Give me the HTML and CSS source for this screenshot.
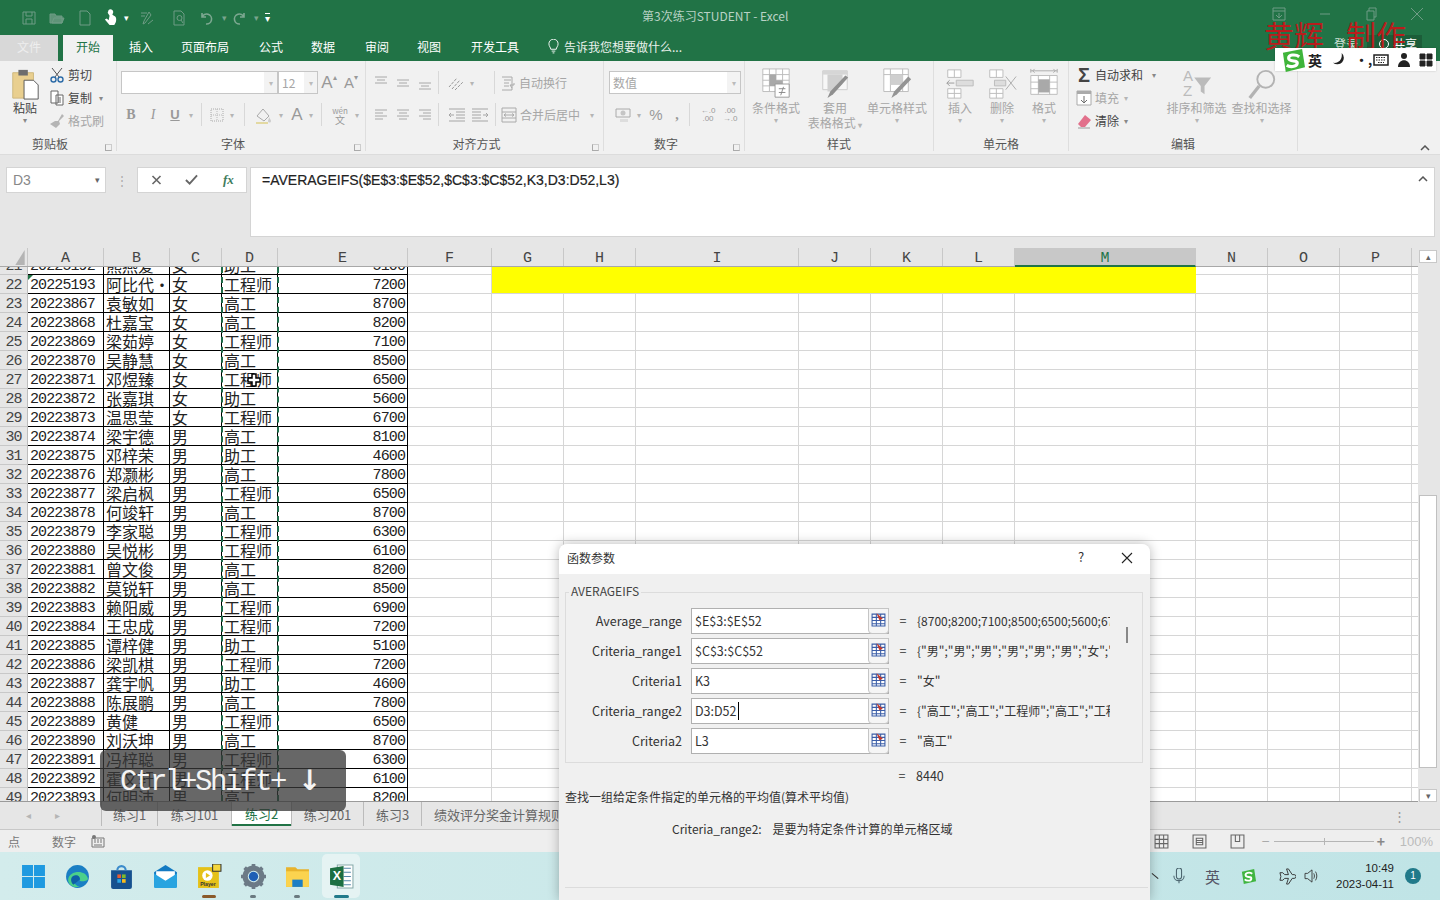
FILE: index.html
```html
<!DOCTYPE html>
<html lang="zh-CN">
<head>
<meta charset="utf-8">
<title>第3次练习STUDENT - Excel</title>
<link rel="stylesheet" href="styles.css">
</head>
<body>
<div class="app">

<header class="titlebar">
  <div class="qat">
    <svg class="qi" viewBox="0 0 16 16"><path d="M2 2h12v12H2zM5 2v4h6V2M5 14V9h6v5" class="gs"/></svg>
    <svg class="qi" viewBox="0 0 16 16"><path d="M1 13V4h5l1 2h6v7zM3 13l2-5h10l-2 5z" class="gs gf"/></svg>
    <svg class="qi" viewBox="0 0 16 16"><path d="M3 1h7l3 3v11H3z" class="gs"/></svg>
    <svg class="qi qw" viewBox="0 0 16 20"><path d="M6 2a3 3 0 0 1 5 2l-1 3 3 2c2 2 1 7-1 9H7L2 12l2-1 2 2 1-5-2-3z" fill="#fff"/></svg>
    <span class="qc">▾</span>
    <svg class="qi qs" viewBox="0 0 16 16"><path d="M2 3h6M2 6h4M10 2l2 3-6 8-2 1 1-3zM9 14l5-4" class="gs"/></svg>
    <svg class="qi" viewBox="0 0 16 16"><path d="M3 1h7l3 3v11H3zM6 8a2.500 2.500 0 1 0 5 0 2.500 2.500 0 1 0-5 0M10 10l2 3" class="gs"/></svg>
    <svg class="qi" viewBox="0 0 16 16"><path d="M3 3v4h4M3 7a5 5 0 1 1 4 7" class="gs gb"/></svg>
    <span class="qc dim">▾</span>
    <svg class="qi" viewBox="0 0 16 16"><path d="M13 3v4H9M13 7a5 5 0 1 0-4 7" class="gs gb"/></svg>
    <span class="qc dim">▾</span>
    <span class="qm">▾</span>
  </div>
  <div class="doc-title">第3次练习STUDENT - Excel</div>
  <div class="winctl">
    <svg class="wi" viewBox="0 0 14 14"><path d="M1 1h12v12H1zM1 4h12M7 6v5M4 8l3 3 3-3" class="gs"/></svg>
    <svg class="wi" viewBox="0 0 14 14"><path d="M2 7h10" class="gs"/></svg>
    <svg class="wi" viewBox="0 0 14 14"><path d="M3 4h7v9H3zM5 4V1h7v9h-2" class="gs"/></svg>
    <svg class="wi" viewBox="0 0 14 14"><path d="M1 1l12 12M13 1L1 13" class="gs"/></svg>
  </div>
</header>

<nav class="tabs">
  <span class="tab file">文件</span>
  <span class="tab home">开始</span>
  <span class="tab t-a">插入</span>
  <span class="tab t-b">页面布局</span>
  <span class="tab t-c">公式</span>
  <span class="tab t-d">数据</span>
  <span class="tab t-e">审阅</span>
  <span class="tab t-f">视图</span>
  <span class="tab t-g">开发工具</span>
  <span class="tell">
    <svg class="bulb" viewBox="0 0 12 16"><path d="M3 11c0-2-2-3-2-6a5 5 0 0 1 10 0c0 3-2 4-2 6zM4 13h4M5 15h2" fill="none" stroke="#fff"/></svg>
    告诉我您想要做什么...
  </span>
  <span class="signin"><span class="login">登录</span><span class="share"><i class="person"></i>共享</span></span>
</nav>

<section class="ribbon">
  <div class="group g-clip">
    <div class="gbody">
      <div class="bigbtn paste">
        <svg class="ic-paste" viewBox="0 0 30 34">
          <path d="M2 5h22v27H2z" fill="#e9cf8f" stroke="#cdb67c"/>
          <path d="M8 2h10v6H8z" fill="#6d6d6d"/>
          <path d="M14 13h10l5 5v15H14z" fill="#fff" stroke="#555"/>
        </svg>
        <span class="dark">粘贴</span>
        <span class="car">▾</span>
      </div>
      <div class="smallcol">
        <div class="srow dark"><svg class="i16" viewBox="0 0 16 16"><path d="M3 1l7 9M13 1L6 10" stroke="#555" fill="none"/><circle cx="4.500" cy="12.500" r="2.500" fill="none" stroke="#2d6ca8" stroke-width="1.400"/><circle cx="11.500" cy="12.500" r="2.500" fill="none" stroke="#2d6ca8" stroke-width="1.400"/></svg>剪切</div>
        <div class="srow dark"><svg class="i16" viewBox="0 0 16 16"><path d="M2 1h7v12H2zM7 5h7v10H7zM9 8h3M9 10h3M9 12h3" fill="#fff" stroke="#666"/></svg>复制<span class="car lcar">▾</span></div>
        <div class="srow off"><svg class="i16" viewBox="0 0 16 16"><path d="M13 1l2 2-5 5 1 3-4 4-6-4 5-3 3 0z" fill="#b5b5b5"/></svg>格式刷</div>
      </div>
    </div>
    <div class="glabel lab-l">剪贴板<i class="launch"></i></div>
  </div>

  <div class="group g-font">
    <div class="gbody col">
      <div class="r1">
        <span class="fbox w-font"><span class="fdrop">▾</span></span>
        <span class="fbox w-size off">12<span class="fdrop">▾</span></span>
        <span class="ib w-22 big off">A<sup>▴</sup></span>
        <span class="ib w-22 mid off">A<sup>▾</sup></span>
      </div>
      <div class="r2 off">
        <span class="ib w-22 bold">B</span>
        <span class="ib w-22 ital">I</span>
        <span class="ib w-22 und">U</span>
        <span class="ib w-10 car">▾</span>
        <i class="vs"></i>
        <svg class="i16 mx-b" viewBox="0 0 16 16"><path d="M2 2h12v12H2z" fill="none" stroke="#aaa" stroke-dasharray="1 1"/><path d="M8 2v12M2 8h12" stroke="#bbb" stroke-dasharray="1 1"/></svg>
        <span class="ib w-14 car">▾</span>
        <i class="vs"></i>
        <svg class="i20 paint" viewBox="0 0 20 18"><path d="M3 10l6-7 6 7-5 5z" fill="none" stroke="#aaa"/><path d="M15 11c1 2 2 3 2 4a1.500 1.500 0 0 1-3 0c0-1 1-2 1-4" fill="#ccc"/><path d="M2 16h12v2H2z" fill="#e3d9a2"/></svg>
        <span class="ib w-14 car">▾</span>
        <span class="ib w-18 big">A</span>
        <span class="ib w-10 car">▾</span>
        <i class="vs"></i>
        <span class="wen"><small>wén</small>文</span>
        <span class="ib w-10 car">▾</span>
      </div>
    </div>
    <div class="glabel lab-l">字体<i class="launch"></i></div>
  </div>

  <div class="group g-align">
    <div class="gbody col">
      <div class="r1 al1 off">
        <svg class="i16 lines top" viewBox="0 0 16 16"><path d="M2 2h12M4 5h8M2 8h12"/></svg>
        <svg class="i16 lines" viewBox="0 0 16 16"><path d="M2 5h12M4 8h8M2 11h12"/></svg>
        <svg class="i16 lines" viewBox="0 0 16 16"><path d="M2 8h12M4 11h8M2 14h12"/></svg>
        <i class="vs"></i>
        <svg class="i20 ml-o" viewBox="0 0 20 16"><path d="M2 12L10 3M5 14l8-9M8 15l8-8" fill="none" stroke="#999" stroke-dasharray="3 1"/></svg>
        <span class="ib w-10 car">▾</span>
        <i class="vs vs-b"></i>
        <svg class="i16" viewBox="0 0 16 16"><path d="M2 2h10v13H2M4 5h7M4 8h5M4 11h5M10 10h4v-2M12 13l-2-3" fill="none" stroke="#aaa"/></svg>
        <span class="wtext">自动换行</span>
      </div>
      <div class="r2 al2 off">
        <svg class="i16 lines" viewBox="0 0 16 16"><path d="M2 3h12M2 6h8M2 9h12M2 12h8"/></svg>
        <svg class="i16 lines" viewBox="0 0 16 16"><path d="M2 3h12M4 6h8M2 9h12M4 12h8"/></svg>
        <svg class="i16 lines" viewBox="0 0 16 16"><path d="M2 3h12M6 6h8M2 9h12M6 12h8"/></svg>
        <i class="vs"></i>
        <svg class="i20 ml-i" viewBox="0 0 20 16"><path d="M2 2h16M9 5h9M9 8h9M9 11h9M2 14h16M7 8H2M4 6L2 8l2 2" fill="none" stroke="#a5a5a5"/></svg>
        <svg class="i20" viewBox="0 0 20 16"><path d="M2 2h16M2 5h9M2 8h9M2 11h9M2 14h16M13 8h5M16 6l2 2-2 2" fill="none" stroke="#a5a5a5"/></svg>
        <i class="vs vs-c"></i>
        <svg class="i16" viewBox="0 0 16 16"><path d="M1 1h14v14H1zM1 5h14M1 11h14M3 8h10M5 6.500L3 8l2 1.500M11 6.500L13 8l-2 1.500" fill="none" stroke="#aaa"/></svg>
        <span class="wtext">合并后居中</span>
        <span class="ib w-24 car">▾</span>
      </div>
    </div>
    <div class="glabel lab-l">对齐方式<i class="launch"></i></div>
  </div>

  <div class="group g-num">
    <div class="gbody col">
      <div class="r1 n1"><span class="fbox w-num off">数值<span class="fdrop">▾</span></span></div>
      <div class="r2 n2 off">
        <svg class="i20" viewBox="0 0 20 16"><path d="M2 2h14v8H2z" fill="none" stroke="#aaa"/><circle cx="9" cy="6" r="2.500" fill="#c5c5c5"/><path d="M6 12h8v3H6z" fill="#ddd"/></svg>
        <span class="ib w-10 car">▾</span>
        <span class="ib w-28 pct">%</span>
        <span class="ib w-14 bold">,</span>
        <i class="vs"></i>
        <span class="dec">←.0<br>.00</span>
        <span class="dec">.00<br>→.0</span>
      </div>
    </div>
    <div class="glabel lab-l">数字<i class="launch"></i></div>
  </div>

  <div class="group g-style">
    <div class="gbody off">
      <div class="bigbtn w-cf">
        <svg class="ic-big" viewBox="0 0 32 34"><path d="M2 1h28v24H2zM2 7h28M2 13h28M2 19h28M9 1v24M16 1v24M23 1v24" fill="#fff" stroke="#bbb"/><path d="M9 7h7v6h7v6H9z" fill="#a9a9a9"/><path d="M15 17h15v14H15z" fill="#fff" stroke="#999"/><path d="M19 22h7M19 26h7M24 20l-3 9" stroke="#888" fill="none"/></svg>
        <span>条件格式</span><span class="car">▾</span>
      </div>
      <div class="bigbtn w-tf">
        <svg class="ic-big" viewBox="0 0 32 34"><path d="M3 3h26v20H3z" fill="#f7f7f7" stroke="#ccc"/><path d="M3 3h26v4H3z" fill="#d6d6d6"/><path d="M8 7h16v10L14 25H8z" fill="#d0d0d0"/><path d="M30 10L14 28l-6 4 3-7 16-17z" fill="#8f8f8f"/></svg>
        <span>套用</span><span>表格格式 <b class="car">▾</b></span>
      </div>
      <div class="bigbtn w-cs">
        <svg class="ic-big" viewBox="0 0 32 34"><path d="M2 1h26v24H2zM2 7h26M9 1v24M22 1v24" fill="#fff" stroke="#bbb"/><path d="M9 7h13v11H9z" fill="#cfcfcf"/><path d="M31 12L16 28l-6 4 3-7 15-16z" fill="#949494"/></svg>
        <span>单元格样式</span><span class="car">▾</span>
      </div>
    </div>
    <div class="glabel">样式</div>
  </div>

  <div class="group g-cells">
    <div class="gbody off">
      <div class="bigbtn w-42">
        <svg class="ic-big" viewBox="0 0 32 34"><path d="M3 2h14v8H3zM3 22h14v10H3zM10 2v8M10 22v10M3 27h14" fill="#fff" stroke="#bbb"/><path d="M12 13h18v6H12z" fill="#ddd" stroke="#bbb"/><path d="M10 16H2M5 13l-3 3 3 3" fill="none" stroke="#999"/></svg>
        <span>插入</span><span class="car">▾</span>
      </div>
      <div class="bigbtn w-42">
        <svg class="ic-big" viewBox="0 0 32 34"><path d="M3 2h14v8H3zM3 22h14v10H3zM10 2v8M10 22v10M3 27h14" fill="#fff" stroke="#bbb"/><path d="M8 13h12v6H8z" fill="#ddd" stroke="#bbb"/><path d="M20 9l11 14M31 9L20 23" stroke="#aaa" fill="none"/></svg>
        <span>删除</span><span class="car">▾</span>
      </div>
      <div class="bigbtn w-42">
        <svg class="ic-big" viewBox="0 0 32 34"><path d="M2 3h28M2 1v4M30 1v4M4 3l2-2M4 3l2 2M28 3l-2-2M28 3l-2 2" fill="none" stroke="#aaa"/><path d="M2 8h28v20H2zM2 15h28M2 22h28M10 8v20M22 8v20" fill="#fff" stroke="#bbb"/><path d="M10 12h12v14H10z" fill="#a9a9a9"/></svg>
        <span>格式</span><span class="car">▾</span>
      </div>
    </div>
    <div class="glabel">单元格</div>
  </div>

  <div class="group g-edit">
    <div class="gbody">
      <div class="smallcol edit">
        <div class="srow dark"><span class="sigma">Σ</span>自动求和<span class="car lcar2">▾</span></div>
        <div class="srow off"><svg class="i16" viewBox="0 0 16 16"><path d="M1 1h14v14H1z" fill="#fff" stroke="#aaa"/><path d="M1 1h14v3H1z" fill="#aaa"/><path d="M8 6v7M5 10l3 3 3-3" fill="none" stroke="#6d6d6d"/></svg>填充<span class="car lcar3">▾</span></div>
        <div class="srow dark"><svg class="i16" viewBox="0 0 16 16"><path d="M9 2l6 5-6 7H5L2 11z" fill="#e2708b"/><path d="M2 15h12" stroke="#999"/></svg>清除<span class="car lcar3">▾</span></div>
      </div>
      <div class="bigbtn w-65 off">
        <svg class="ic-big" viewBox="0 0 34 34"><text x="2" y="14" class="azt">A</text><text x="2" y="30" class="azt">Z</text><path d="M14 10h18l-7 9v9l-4-3v-6z" fill="#bbb"/></svg>
        <span>排序和筛选</span><span class="car">▾</span>
      </div>
      <div class="bigbtn w-65 off">
        <svg class="ic-big" viewBox="0 0 34 34"><circle cx="21" cy="12" r="9" fill="none" stroke="#b3b3b3" stroke-width="2"/><path d="M14 19L4 32" stroke="#b3b3b3" stroke-width="3.500"/></svg>
        <span>查找和选择</span><span class="car">▾</span>
      </div>
    </div>
    <div class="glabel">编辑</div>
  </div>
  <div class="collapse">
    <svg class="chev" viewBox="0 0 10 6"><path d="M1 5l4-4 4 4" fill="none" stroke="#555" stroke-width="1.500"/></svg>
  </div>
</section>

<section class="fbar">
  <div class="namebox">D3<span class="nb-drop">▾</span></div>
  <div class="fgrip">⋮</div>
  <div class="fbtns">
    <svg class="fi" viewBox="0 0 12 12"><path d="M2 2l8 8M10 2l-8 8" stroke="#666" stroke-width="1.600"/></svg>
    <svg class="fi" viewBox="0 0 14 12"><path d="M1 6l4 4 8-9" fill="none" stroke="#666" stroke-width="2"/></svg>
    <span class="fx">fx</span>
  </div>
  <div class="finput">=AVERAGEIFS($E$3:$E$52,$C$3:$C$52,K3,D3:D52,L3)<span class="fup">
    <svg class="chev" viewBox="0 0 10 6"><path d="M1 5l4-4 4 4" fill="none" stroke="#555" stroke-width="1.500"/></svg></span></div>
</section>

<section class="sheet">
  <div class="sheet-main">
    <div class="colhead">
      <div class="corner"><svg class="tri" viewBox="0 0 10 16"><path d="M10 0v16H0z" fill="#b4b4b4"/></svg></div>
      <div class="ch ca">A</div><div class="ch cb">B</div><div class="ch cc">C</div><div class="ch cd">D</div><div class="ch ce">E</div>
      <div class="ch cf">F</div><div class="ch cg">G</div><div class="ch cg">H</div><div class="ch ci">I</div><div class="ch cg">J</div><div class="ch cg">K</div><div class="ch cg">L</div><div class="ch cm sel">M</div><div class="ch cg">N</div><div class="ch cg">O</div><div class="ch cg">P</div>
    </div>
    <div class="body">
      <div class="rows">
        <div class="row first"><div class="rh">21</div><div class="c ca n">20225192</div><div class="c cb">熊燕爱</div><div class="c cc">女</div><div class="c cd">助工</div><div class="c ce n r">5100</div></div>
        <div class="row"><div class="rh">22</div><div class="c ca n flag">20225193</div><div class="c cb">阿比代·</div><div class="c cc">女</div><div class="c cd">工程师</div><div class="c ce n r">7200</div></div>
        <div class="row"><div class="rh">23</div><div class="c ca n">20223867</div><div class="c cb">袁敏如</div><div class="c cc">女</div><div class="c cd">高工</div><div class="c ce n r">8700</div></div>
        <div class="row"><div class="rh">24</div><div class="c ca n">20223868</div><div class="c cb">杜嘉宝</div><div class="c cc">女</div><div class="c cd">高工</div><div class="c ce n r">8200</div></div>
        <div class="row"><div class="rh">25</div><div class="c ca n">20223869</div><div class="c cb">梁茹婷</div><div class="c cc">女</div><div class="c cd">工程师</div><div class="c ce n r">7100</div></div>
        <div class="row"><div class="rh">26</div><div class="c ca n">20223870</div><div class="c cb">吴静慧</div><div class="c cc">女</div><div class="c cd">高工</div><div class="c ce n r">8500</div></div>
        <div class="row"><div class="rh">27</div><div class="c ca n">20223871</div><div class="c cb">邓煜臻</div><div class="c cc">女</div><div class="c cd">工程师</div><div class="c ce n r">6500</div></div>
        <div class="row"><div class="rh">28</div><div class="c ca n">20223872</div><div class="c cb">张嘉琪</div><div class="c cc">女</div><div class="c cd">助工</div><div class="c ce n r">5600</div></div>
        <div class="row"><div class="rh">29</div><div class="c ca n">20223873</div><div class="c cb">温思莹</div><div class="c cc">女</div><div class="c cd">工程师</div><div class="c ce n r">6700</div></div>
        <div class="row"><div class="rh">30</div><div class="c ca n">20223874</div><div class="c cb">梁宇德</div><div class="c cc">男</div><div class="c cd">高工</div><div class="c ce n r">8100</div></div>
        <div class="row"><div class="rh">31</div><div class="c ca n">20223875</div><div class="c cb">邓梓荣</div><div class="c cc">男</div><div class="c cd">助工</div><div class="c ce n r">4600</div></div>
        <div class="row"><div class="rh">32</div><div class="c ca n">20223876</div><div class="c cb">郑灏彬</div><div class="c cc">男</div><div class="c cd">高工</div><div class="c ce n r">7800</div></div>
        <div class="row"><div class="rh">33</div><div class="c ca n">20223877</div><div class="c cb">梁启枫</div><div class="c cc">男</div><div class="c cd">工程师</div><div class="c ce n r">6500</div></div>
        <div class="row"><div class="rh">34</div><div class="c ca n">20223878</div><div class="c cb">何竣轩</div><div class="c cc">男</div><div class="c cd">高工</div><div class="c ce n r">8700</div></div>
        <div class="row"><div class="rh">35</div><div class="c ca n">20223879</div><div class="c cb">李家聪</div><div class="c cc">男</div><div class="c cd">工程师</div><div class="c ce n r">6300</div></div>
        <div class="row"><div class="rh">36</div><div class="c ca n">20223880</div><div class="c cb">吴悦彬</div><div class="c cc">男</div><div class="c cd">工程师</div><div class="c ce n r">6100</div></div>
        <div class="row"><div class="rh">37</div><div class="c ca n">20223881</div><div class="c cb">曾文俊</div><div class="c cc">男</div><div class="c cd">高工</div><div class="c ce n r">8200</div></div>
        <div class="row"><div class="rh">38</div><div class="c ca n">20223882</div><div class="c cb">莫锐轩</div><div class="c cc">男</div><div class="c cd">高工</div><div class="c ce n r">8500</div></div>
        <div class="row"><div class="rh">39</div><div class="c ca n">20223883</div><div class="c cb">赖阳威</div><div class="c cc">男</div><div class="c cd">工程师</div><div class="c ce n r">6900</div></div>
        <div class="row"><div class="rh">40</div><div class="c ca n">20223884</div><div class="c cb">王忠成</div><div class="c cc">男</div><div class="c cd">工程师</div><div class="c ce n r">7200</div></div>
        <div class="row"><div class="rh">41</div><div class="c ca n">20223885</div><div class="c cb">谭梓健</div><div class="c cc">男</div><div class="c cd">助工</div><div class="c ce n r">5100</div></div>
        <div class="row"><div class="rh">42</div><div class="c ca n">20223886</div><div class="c cb">梁凯棋</div><div class="c cc">男</div><div class="c cd">工程师</div><div class="c ce n r">7200</div></div>
        <div class="row"><div class="rh">43</div><div class="c ca n">20223887</div><div class="c cb">龚宇帆</div><div class="c cc">男</div><div class="c cd">助工</div><div class="c ce n r">4600</div></div>
        <div class="row"><div class="rh">44</div><div class="c ca n">20223888</div><div class="c cb">陈展鹏</div><div class="c cc">男</div><div class="c cd">高工</div><div class="c ce n r">7800</div></div>
        <div class="row"><div class="rh">45</div><div class="c ca n">20223889</div><div class="c cb">黄健</div><div class="c cc">男</div><div class="c cd">工程师</div><div class="c ce n r">6500</div></div>
        <div class="row"><div class="rh">46</div><div class="c ca n">20223890</div><div class="c cb">刘沃坤</div><div class="c cc">男</div><div class="c cd">高工</div><div class="c ce n r">8700</div></div>
        <div class="row"><div class="rh">47</div><div class="c ca n">20223891</div><div class="c cb">冯梓聪</div><div class="c cc">男</div><div class="c cd">工程师</div><div class="c ce n r">6300</div></div>
        <div class="row"><div class="rh">48</div><div class="c ca n">20223892</div><div class="c cb">霍文轩</div><div class="c cc">男</div><div class="c cd">工程师</div><div class="c ce n r">6100</div></div>
        <div class="row"><div class="rh">49</div><div class="c ca n">20223893</div><div class="c cb">何明沛</div><div class="c cc">男</div><div class="c cd">高工</div><div class="c ce n r">8200</div></div>
      </div>
      <div class="pane">
        <div class="pc cf"></div><div class="pc cg"></div><div class="pc cg"></div><div class="pc ci"></div><div class="pc cg"></div><div class="pc cg"></div><div class="pc cg"></div><div class="pc cm"></div><div class="pc cg"></div><div class="pc cg"></div><div class="pc cg"></div>
        <div class="yellow"></div>
      </div>
      <div class="ants"></div>
      <svg class="cross" viewBox="0 0 14 14"><path d="M5 1h4v4h4v4H9v4H5V9H1V5h4z" fill="#fff" stroke="#000" stroke-width="1.500"/></svg>
    </div>
  </div>
  <aside class="vscroll">
    <span class="sb-btn">▴</span>
    <span class="sb-track"><span class="sb-thumb"></span></span>
    <span class="sb-btn">▾</span>
  </aside>
</section>

<section class="sheettabs">
  <span class="st-nav">◂</span><span class="st-nav">▸</span>
  <span class="st w-st1">练习1</span>
  <span class="st w-st2">练习101</span>
  <span class="st active">练习2</span>
  <span class="st w-st4">练习201</span>
  <span class="st w-st5">练习3</span>
  <span class="st w-st6">绩效评分奖金计算规则</span>
  <span class="st-grip">⋮</span>
</section>

<section class="status">
  <span class="s-a">点</span>
  <span class="s-b">数字</span>
  <svg class="s-ic" viewBox="0 0 14 14"><path d="M1 4h12v9H1zM3 6h2M6 6h2M9 6h2M3 8h2M6 8h2M9 8h2M3 11h8" fill="none" stroke="#777"/><circle cx="3" cy="3" r="2" fill="#777"/></svg>
  <span class="s-sp"></span>
  <svg class="v-ic" viewBox="0 0 14 14"><path d="M1 1h12v12H1zM1 5h12M1 9h12M5 1v12M9 1v12" fill="none" stroke="#666"/></svg>
  <svg class="v-ic" viewBox="0 0 14 14"><path d="M1 1h12v12H1zM4 4h6v6H4zM4 6h6M4 8h6" fill="none" stroke="#666"/></svg>
  <svg class="v-ic" viewBox="0 0 14 14"><path d="M1 1h12v12H1zM5 1v6h4V1" fill="none" stroke="#666"/></svg>
  <span class="z-minus">−</span>
  <span class="z-track"><i class="z-tick"></i></span>
  <span class="z-plus">+</span>
  <span class="z-pct">100%</span>
</section>

<footer class="taskbar">
  <div class="tb-apps">
    <span class="app-i"><svg class="ai" viewBox="0 0 24 24"><path d="M1 1h10.500v10.500H1zM12.500 1H23v10.500H12.500zM1 12.500h10.500V23H1zM12.500 12.500H23V23H12.500z" fill="#1f9ae0"/></svg></span>
    <span class="app-i"><svg class="ai" viewBox="0 0 24 24"><circle cx="12" cy="12" r="11" fill="#1b7fc4"/><path d="M3 15C4 6 20 5 22 14c0 3-6 3-8 2 2-3-2-5-5-3-2 2-1 7 5 9-6 1-11-2-11-7z" fill="#4bd08a"/><path d="M8 20c-3-3-3-8 1-9 3-1 6 1 5 4" fill="#0e5fa6"/></svg></span>
    <span class="app-i"><svg class="ai" viewBox="0 0 24 24"><path d="M2 6h20v16a2 2 0 0 1-2 2H4a2 2 0 0 1-2-2z" fill="#17518f"/><path d="M8 6a4 4 0 0 1 8 0" fill="none" stroke="#3b8bcb" stroke-width="2"/><path d="M8 10h3.500v3.500H8z" fill="#e85c33"/><path d="M12.500 10H16v3.500h-3.500z" fill="#7fba2c"/><path d="M8 14.500h3.500V18H8z" fill="#2ba5e6"/><path d="M12.500 14.500H16V18h-3.500z" fill="#fbbb1b"/></svg></span>
    <span class="app-i"><svg class="ai" viewBox="0 0 24 24"><path d="M1 8l11-7 11 7v14H1z" fill="#137ac2"/><path d="M3 7h18v8l-9 5-9-5z" fill="#fff"/><path d="M1 9l11 7 11-7v13a1 1 0 0 1-1 1H2a1 1 0 0 1-1-1z" fill="#29a4e0"/></svg></span>
    <span class="app-i dot-b"><svg class="ai" viewBox="0 0 24 24"><path d="M1 3h20v20H1z" fill="#e5c118"/><circle cx="10" cy="11" r="5" fill="#fff"/><path d="M8.500 8.500v5l4-2.500z" fill="#e5c118"/><path d="M15 0h8v7h-8z" fill="#f4d63d" stroke="#333"/><text x="3" y="21" class="playt">Player</text></svg></span>
    <span class="app-i dot"><svg class="ai" viewBox="0 0 24 24"><circle cx="12" cy="12" r="8" fill="none" stroke="#6c7a86" stroke-width="5"/><path d="M12 0v4M12 20v4M0 12h4M20 12h4M3.500 3.500l3 3M17.500 17.500l3 3M20.500 3.500l-3 3M6.500 17.500l-3 3" stroke="#6c7a86" stroke-width="3.500"/><circle cx="12" cy="12" r="4.500" fill="#1f5fb5"/></svg></span>
    <span class="app-i dot"><svg class="ai" viewBox="0 0 24 24"><path d="M1 3h9l2 2h11v17H1z" fill="#e8b32c"/><path d="M1 7h22v15H1z" fill="#fbd34f"/><path d="M7 15h10v7H7z" fill="#1d7ec4"/></svg></span>
    <span class="app-i active-app"><svg class="ai" viewBox="0 0 24 24"><path d="M8 1h15v22H8z" fill="#fff" stroke="#8aa"/><path d="M14 4h7M14 8h7M14 12h7M14 16h7M14 20h7" stroke="#58a"/><path d="M1 4l13-2v20L1 20z" fill="#1d6f42"/><text x="3.500" y="15.500" class="xt">X</text></svg></span>
  </div>
  <div class="tray">
    <svg class="tr-i tr-up" viewBox="0 0 10 8"><path d="M1 1l7 6" stroke="#333" stroke-width="1.200" fill="none"/></svg>
    <svg class="tr-i tr-mic" viewBox="0 0 14 18"><path d="M4 2a3 3 0 0 1 6 0v7a3 3 0 0 1-6 0zM1 8c0 8 12 8 12 0M7 13v4" fill="none" stroke="#47606a" stroke-width="1.200"/></svg>
    <span class="tr-ying">英</span>
    <svg class="tr-i tr-s" viewBox="0 0 18 18"><path d="M2 4l13-3 2 13-13 3z" fill="#40b540"/><path d="M13 6c-3-2-8-1-7 2s6 0 6 3-5 3-7 1" fill="none" stroke="#fff" stroke-width="2"/></svg>
    <svg class="tr-i tr-pl" viewBox="0 0 18 18"><path d="M1 5h3l2 2h4L8 1h2l4 6h2a2 2 0 0 1 0 4h-2l-4 6H8l2-6H6l-2 2H1l1-4z" fill="none" stroke="#333"/></svg>
    <svg class="tr-i tr-vol" viewBox="0 0 18 16"><path d="M1 5h3l5-4v14l-5-4H1zM11 5c1 2 1 4 0 6M13 3c2 3 2 7 0 10" fill="none" stroke="#333"/></svg>
    <div class="clock"><span>10:49</span><span>2023-04-11</span></div>
    <span class="badge">1</span>
  </div>
</footer>

<!-- overlays -->
<div class="keytip">Ctrl+Shift+<span class="key-arrow">↓</span></div>
<div class="watermark"><span>黄辉</span><span>制作</span></div>
<div class="ime">
  <svg class="ime-s" viewBox="0 0 26 26"><path d="M3 5l20-4 3 19-20 5z" fill="#3fb53a"/><path d="M20 9c-4-3-12-2-11 2s10 1 9 5-8 4-11 2" fill="none" stroke="#fff" stroke-width="3.200"/></svg>
  <span class="ime-y">英</span>
  <svg class="ime-i ime-moon" viewBox="0 0 14 14"><path d="M9 1a6 6 0 1 1-8 9c5 1 9-3 8-9z" fill="#222"/></svg>
  <span class="ime-p">•,</span>
  <svg class="ime-i ime-kb" viewBox="0 0 16 14"><path d="M1 2h14v10H1z" fill="none" stroke="#222" stroke-width="1.500"/><path d="M3 4.500h10M3 7h10M5 9.500h6" stroke="#222" stroke-dasharray="1.500 1" stroke-width="1.200"/></svg>
  <svg class="ime-i" viewBox="0 0 14 14"><circle cx="7" cy="3" r="3" fill="#222"/><path d="M1 14c0-9 12-9 12 0z" fill="#222"/></svg>
  <svg class="ime-i" viewBox="0 0 14 14"><path d="M1 1h5v5H1zM8 1h5v5H8zM1 8h5v5H1zM8 8h5v5H8z" fill="#222" stroke="#222" stroke-linejoin="round"/></svg>
</div>

<div class="dialog">
  <div class="d-title"><span>函数参数</span><span class="d-q">?</span>
    <svg class="d-x" viewBox="0 0 12 12"><path d="M1 1l10 10M11 1L1 11" stroke="#222" stroke-width="1.100"/></svg></div>
  <div class="d-body">
    <fieldset class="d-group">
      <legend>AVERAGEIFS</legend>
      <div class="d-rows">
        <div class="d-row"><label>Average_range</label><div class="d-input">$E$3:$E$52<span class="rb"><svg class="rb-i" viewBox="0 0 14 14"><path d="M1 2h12v11H1zM1 5h12M1 8h12M1 11h12M5 2v11M9 2v11" fill="#fff" stroke="#3b5ea8"/><path d="M5 1l6 5-3 2z" fill="#c43b2e"/></svg></span></div><span class="d-eq">=</span><span class="d-val">{8700;8200;7100;8500;6500;5600;6700;8100</span></div>
        <div class="d-row"><label>Criteria_range1</label><div class="d-input">$C$3:$C$52<span class="rb"><svg class="rb-i" viewBox="0 0 14 14"><path d="M1 2h12v11H1zM1 5h12M1 8h12M1 11h12M5 2v11M9 2v11" fill="#fff" stroke="#3b5ea8"/><path d="M5 1l6 5-3 2z" fill="#c43b2e"/></svg></span></div><span class="d-eq">=</span><span class="d-val">{"男";"男";"男";"男";"男";"男";"女";"女";"女"</span></div>
        <div class="d-row"><label>Criteria1</label><div class="d-input">K3<span class="rb"><svg class="rb-i" viewBox="0 0 14 14"><path d="M1 2h12v11H1zM1 5h12M1 8h12M1 11h12M5 2v11M9 2v11" fill="#fff" stroke="#3b5ea8"/><path d="M5 1l6 5-3 2z" fill="#c43b2e"/></svg></span></div><span class="d-eq">=</span><span class="d-val">"女"</span></div>
        <div class="d-row"><label>Criteria_range2</label><div class="d-input">D3:D52<i class="caret"></i><span class="rb"><svg class="rb-i" viewBox="0 0 14 14"><path d="M1 2h12v11H1zM1 5h12M1 8h12M1 11h12M5 2v11M9 2v11" fill="#fff" stroke="#3b5ea8"/><path d="M5 1l6 5-3 2z" fill="#c43b2e"/></svg></span></div><span class="d-eq">=</span><span class="d-val">{"高工";"高工";"工程师";"高工";"工程师";"助工"</span></div>
        <div class="d-row"><label>Criteria2</label><div class="d-input">L3<span class="rb"><svg class="rb-i" viewBox="0 0 14 14"><path d="M1 2h12v11H1zM1 5h12M1 8h12M1 11h12M5 2v11M9 2v11" fill="#fff" stroke="#3b5ea8"/><path d="M5 1l6 5-3 2z" fill="#c43b2e"/></svg></span></div><span class="d-eq">=</span><span class="d-val">"高工"</span></div>
        <i class="d-thumb"></i>
      </div>
    </fieldset>
    <div class="d-result"><span class="d-eq">=</span><span>8440</span></div>
    <p class="d-desc">查找一组给定条件指定的单元格的平均值(算术平均值)</p>
    <p class="d-help">Criteria_range2:&nbsp;&nbsp;&nbsp;&nbsp;是要为特定条件计算的单元格区域</p>
    <div class="d-rule"></div>
  </div>
</div>

</div>
</body>
</html>
```

FILE: styles.css
```css
* { box-sizing: border-box; }
html, body { margin: 0; padding: 0; }
body { font-family: "Noto Sans CJK SC", "Liberation Sans", sans-serif; font-size: 12px; color: #444; overflow: hidden; }
.app { position: relative; width: 1440px; height: 900px; overflow: hidden; display: flex; flex-direction: column; background: #e6e6e6; }

.gs { fill: none; stroke: #6f9c85; stroke-width: 1; }
.gf { fill: #5f9478; }
.gb { stroke: #7da891; stroke-width: 1.600; }

/* title bar */
.titlebar { height: 35px; flex: none; background: #217346; display: flex; align-items: center; position: relative; }
.qat { display: flex; align-items: center; padding-left: 21px; gap: 6px; width: 600px; }
.qi { width: 16px; height: 16px; margin-right: 6px; }
.qw { width: 15px; height: 19px; margin-right: 0; margin-left: -2px; }
.qs { margin-right: 10px; }
.qc { color: #fff; font-size: 9px; margin-left: 0; margin-right: 4px; }
.qc.dim { color: #78a48d; margin-left: -5px; margin-right: -2px; }
.qm { color: #fff; font-size: 10px; margin-left: 2px; border-top: 1px solid #fff; line-height: 8px; }
.doc-title { position: absolute; left: 642px; top: 7px; color: #b9d2c5; font-size: 12px; line-height: 18px; }
.winctl { margin-left: auto; display: flex; gap: 0; padding-right: 0; align-items: center; }
.wi { width: 14px; height: 14px; margin: 0 16px 8px 16px; }

/* tabs */
.tabs { height: 26px; flex: none; background: #217346; display: flex; color: #fff; position: relative; }
.tab { display: flex; align-items: center; justify-content: center; height: 26px; padding-bottom: 4px; }
.tab.file { width: 58px; background: #d8d8d8; color: #eee; }
.tab.home { width: 50px; margin-left: 5px; background: #f1f1f1; color: #217346; }
.t-a { width: 56px; }
.t-b { width: 72px; }
.t-c { width: 60px; }
.t-d { width: 44px; }
.t-e { width: 64px; }
.t-f { width: 40px; }
.t-g { width: 92px; }
.tell { display: flex; align-items: center; gap: 5px; margin-left: 7px; color: #e9f1ec; padding-bottom: 4px; }
.bulb { width: 11px; height: 15px; }
.signin { margin-left: auto; display: flex; align-items: flex-start; padding-right: 18px; }
.login { color: #cfe0d6; margin-right: 9px; line-height: 18px; }
.share { background: #1c5d39; width: 55px; height: 13px; line-height: 18px; text-align: right; padding-right: 5px; display: flex; justify-content: flex-end; gap: 4px; }
.person { width: 10px; height: 10px; border: 1px solid #fff; border-radius: 50%; margin-top: 4px; display: block; }

/* ribbon */
.ribbon { height: 94px; flex: none; background: #f1f1f1; display: flex; border-bottom: 1px solid #dcdcdc; position: relative; }
.group { display: flex; flex-direction: column; border-right: 1px solid #dedede; height: 90px; flex: none; }
.gbody { height: 73px; display: flex; flex: none; }
.gbody.col { flex-direction: column; }
.glabel { height: 19px; line-height: 19px; text-align: center; color: #555; position: relative; }
.lab-l { padding-right: 16px; }
.launch { position: absolute; right: 4px; bottom: 2px; width: 7px; height: 7px; border-left: 1px solid #aaa; border-bottom: 1px solid #aaa; border-top: 1px solid #ccc; border-right: 1px solid #ccc; }
.off { color: #a6a6a6; }
.dark { color: #444; }
.car { font-size: 8px; color: #888; line-height: 10px; }
.off .car, .off.car { color: #b5b5b5; }
.g-clip { width: 117px; }
.g-font { width: 249px; }
.g-align { width: 238px; }
.g-num { width: 141px; }
.g-style { width: 189px; }
.g-cells { width: 135px; }
.g-edit { width: 229px; }
.bigbtn { display: flex; flex-direction: column; align-items: center; flex: none; padding-top: 7px; line-height: 15px; }
.paste { width: 38px; margin-left: 6px; }
.ic-paste { width: 30px; height: 32px; }
.ic-big { width: 32px; height: 32px; }
.smallcol { display: flex; flex-direction: column; padding-top: 2px; margin-left: 5px; }
.srow { height: 23px; display: flex; align-items: center; gap: 3px; white-space: nowrap; }
.i16 { width: 16px; height: 16px; flex: none; }
.i20 { width: 20px; height: 18px; flex: none; }
.lcar { margin-left: 4px; }
.lcar2 { margin-left: 6px; }
.lcar3 { margin-left: 2px; }
.r1, .r2 { display: flex; align-items: center; height: 23px; flex: none; }
.r1 { margin-top: 10px; margin-left: 4px; }
.r2 { margin-top: 9px; margin-left: 3px; }
.fbox { height: 23px; background: #fff; border: 1px solid #c6c6c6; display: flex; align-items: center; padding-left: 3px; position: relative; flex: none; }
.fdrop { position: absolute; right: 0; top: 0; bottom: 0; width: 13px; font-size: 8px; color: #bbb; background: #f3f3f3; display: flex; align-items: center; justify-content: center; }
.w-font { width: 157px; }
.w-size { width: 40px; }
.w-num { width: 132px; }
.ib { display: flex; align-items: center; justify-content: center; flex: none; height: 23px; }
.w-10 { width: 10px; }
.w-14 { width: 14px; }
.w-18 { width: 18px; }
.w-22 { width: 22px; }
.w-24 { width: 24px; }
.w-28 { width: 28px; }
.big { font-size: 17px; font-family: "Liberation Sans", sans-serif; color: #999; }
.mid { font-size: 15px; font-family: "Liberation Sans", sans-serif; color: #999; }
.big sup, .mid sup { font-size: 8px; line-height: 8px; align-self: flex-start; margin-top: 3px; }
.bold { font-family: "Liberation Serif", serif; font-weight: 700; font-size: 14px; color: #999; }
.ital { font-family: "Liberation Serif", serif; font-style: italic; font-size: 14px; color: #999; }
.und { font-family: "Liberation Sans", sans-serif; text-decoration: underline; font-size: 13px; font-weight: 700; color: #999; }
.vs { width: 1px; height: 23px; background: #d8d8d8; flex: none; margin: 0 5px; }
.mx-b { margin-left: 2px; }
.paint { margin-left: 4px; }
.wen { display: flex; flex-direction: column; align-items: center; font-size: 10px; line-height: 9px; width: 24px; color: #999; margin-left: 1px; }
.wen small { font-size: 8px; }
.lines { fill: none; stroke: #a8a8a8; stroke-width: 1; margin-right: 6px; }
.al1, .al2 { margin-left: 7px; }
.al1 .vs, .al2 .vs { margin-left: -1px; }
.ml-o { margin-left: 3px; }
.ml-i { margin-left: 3px; margin-right: 3px; }
.al1 .vs.vs-b { margin-left: 17px; margin-right: 5px; }
.al2 .vs.vs-c { margin-left: 5px; margin-right: 5px; }
.wtext { margin-left: 3px; white-space: nowrap; }
.n1 { margin-left: 5px; }
.n2 { margin-left: 10px; }
.n2 .vs { margin-right: 7px; }
.pct { font-size: 15px; font-family: "Liberation Sans", sans-serif; color: #999; margin-left: -2px; }
.dec { font-size: 8px; line-height: 8px; width: 22px; text-align: center; color: #999; font-family: "Liberation Sans", sans-serif; }
.g-style .gbody { padding-left: 7px; }
.w-cf { width: 48px; }
.w-tf { width: 62px; margin-left: 4px; }
.w-cs { width: 62px; margin-left: 0; }
.w-tf span { white-space: nowrap; }
.g-cells .gbody { padding-left: 5px; }
.w-42 { width: 42px; }
.w-65 { width: 65px; }
.edit { width: 88px; flex: none; margin-left: 7px; }
.sigma { font-size: 20px; line-height: 20px; width: 16px; color: #444; font-family: "Liberation Sans", sans-serif; font-weight: 700; text-align: center; }
.azt { font-size: 16px; fill: #bbb; font-family: "Liberation Sans", sans-serif; }
.collapse { margin-left: auto; align-self: flex-end; padding: 0 10px 3px 0; }
.chev { width: 10px; height: 6px; display: block; }

/* formula bar */
.fbar { height: 93px; flex: none; background: #e6e6e6; display: flex; padding: 12px 5px 11px 6px; align-items: flex-start; }
.namebox { width: 100px; height: 26px; background: #fff; border: 1px solid #d4d4d4; display: flex; align-items: center; padding-left: 6px; font-size: 14px; color: #888; position: relative; font-family: "Liberation Sans", sans-serif; }
.nb-drop { position: absolute; right: 5px; font-size: 9px; color: #666; }
.fgrip { width: 31px; height: 26px; line-height: 26px; text-align: center; color: #aaa; }
.fbtns { width: 110px; height: 26px; background: #fff; border: 1px solid #d4d4d4; display: flex; align-items: center; padding-left: 12px; gap: 22px; }
.fi { width: 13px; height: 12px; }
.fx { font-family: "Liberation Serif", serif; font-style: italic; font-size: 13px; color: #3f7d5d; font-weight: 700; margin-left: 3px; }
.finput { flex: 1; margin-left: 3px; height: 70px; background: #fff; border: 1px solid #d4d4d4; padding: 3px 0 0 11px; font-family: "Liberation Sans", sans-serif; font-size: 14px; line-height: 18px; color: #222; position: relative; -webkit-text-stroke: .2px #222; }
.fup { position: absolute; right: 6px; top: 8px; }

/* sheet */
.sheet { height: 554px; flex: none; display: flex; background: #fff; }
.sheet-main { width: 1418px; display: flex; flex-direction: column; }
.colhead { height: 19px; flex: none; display: flex; background: #e6e6e6; border-bottom: 1px solid #a8a8a8; }
.corner { width: 28px; flex: none; border-right: 1px solid #c8c8c8; display: flex; justify-content: flex-end; padding: 2px 2px 0 0; }
.tri { width: 10px; height: 15px; }
.ca { width: 76px; }
.cb { width: 66px; }
.cc { width: 52px; }
.cd { width: 56px; }
.ce { width: 130px; }
.cf { width: 84px; }
.cg { width: 72px; }
.ci { width: 163px; }
.cm { width: 181px; }
.ch { flex: none; text-align: center; font-family: "Liberation Mono", monospace; font-size: 15px; line-height: 21px; color: #444; border-right: 1px solid #c8c8c8; }
.ch.sel { background: #c8c8c8; color: #217346; border-bottom: 2px solid #217346; height: 19px; }
.body { height: 535px; flex: none; display: flex; position: relative; overflow: hidden; border-bottom: 1px solid #9a9a9a; }
.rows { width: 408px; flex: none; display: flex; flex-direction: column; margin-top: -11px; }
.row { height: 19px; flex: none; display: flex; }
.rh { width: 28px; flex: none; background: #e6e6e6; border-right: 1px solid #bdbdbd; border-bottom: 1px solid #c8c8c8; text-align: center; font-family: "Liberation Mono", monospace; font-size: 15px; letter-spacing: -.9px; line-height: 21px; color: #444; }
.c { flex: none; height: 19px; border-right: 1px solid #000; border-bottom: 1px solid #000; padding-left: 2px; font-size: 16px; line-height: 19px; color: #222; white-space: nowrap; overflow: hidden; font-family: "Noto Sans CJK SC", sans-serif; font-weight: 400; }
.c.n { font-family: "Liberation Mono", monospace; font-size: 15px; letter-spacing: -.9px; line-height: 21px; }
.c.r { text-align: right; padding-right: 2px; }
.flag { position: relative; }
.flag::before { content: ""; position: absolute; left: 0; top: 0; border-top: 5px solid #217346; border-right: 5px solid transparent; }
.pane { flex: 1; display: flex; position: relative; background-image: linear-gradient(to bottom, transparent 18px, #d6d6d6 18px); background-size: 100% 19px; background-position: 0 8px; }
.pc { flex: none; height: 100%; border-right: 1px solid #d6d6d6; }
.yellow { position: absolute; left: 84px; top: 0; width: 704px; height: 26px; background: #ffff00; }
.ants { position: absolute; left: 221px; top: 0; width: 58px; height: 100%; border-left: 2px dashed #1f6b4a; border-right: 2px dashed #1f6b4a; }
.cross { position: absolute; left: 247px; top: 106px; width: 14px; height: 14px; }

.vscroll { width: 22px; flex: none; background: #e6e6e6; display: flex; flex-direction: column; padding: 2px 3px 0 1px; height: 554px; }
.sb-btn { height: 13px; flex: none; background: #fff; border: 1px solid #c8c8c8; color: #666; font-size: 9px; line-height: 11px; text-align: center; }
.sb-track { flex: 1; position: relative; }
.sb-thumb { display: block; position: absolute; left: 0; right: 0; top: 232px; height: 273px; background: #fff; border: 1px solid #c0c0c0; }

/* sheet tabs */
.sheettabs { height: 28px; flex: none; background: #e6e6e6; display: flex; align-items: flex-start; border-bottom: 1px solid #c8c8c8; font-size: 13px; color: #666; position: relative; }
.st-nav { width: 29px; text-align: center; color: #b5b5b5; font-size: 10px; line-height: 26px; }
.st-nav:first-child { margin-left: 14px; }
.st { display: flex; align-items: center; justify-content: center; white-space: nowrap; border-right: 1px solid #bbb; height: 24px; }
.w-st1 { width: 57px; border-left: 1px solid #bbb; margin-left: 29px; }
.w-st2 { width: 74px; }
.active { width: 59px; background: #fff; color: #217346; border-bottom: 2px solid #217346; border-right: none; }
.w-st4 { width: 73px; border-left: 1px solid #bbb; }
.w-st5 { width: 58px; }
.w-st6 { width: 160px; justify-content: flex-start; padding-left: 12px; }
.st-grip { margin-left: auto; margin-right: 34px; line-height: 28px; color: #999; }

/* status */
.status { height: 22px; flex: none; background: #eeeeee; display: flex; align-items: center; color: #777; }
.s-a { margin-left: 8px; }
.s-b { margin-left: 32px; }
.s-ic { width: 14px; height: 14px; margin-left: 15px; }
.s-sp { flex: 1; }
.v-ic { width: 15px; height: 15px; margin-right: 23px; }
.z-minus { width: 10px; color: #aaa; font-size: 14px; margin-left: -6px; }
.z-track { width: 100px; height: 1px; background: #b5b5b5; margin: 0 3px 0 2px; position: relative; display: block; }
.z-tick { position: absolute; left: 50px; top: -3px; width: 1px; height: 7px; background: #b5b5b5; }
.z-plus { width: 12px; font-size: 14px; color: #888; font-weight: 700; }
.z-pct { color: #bbb; margin: 0 7px 0 11px; font-size: 13px; font-family: "Liberation Sans", sans-serif; }

/* taskbar */
.taskbar { height: 48px; flex: none; background: linear-gradient(to right, #d3ecec, #c0e4e6); display: flex; align-items: center; }
.tb-apps { display: flex; margin-left: 11px; }
.app-i { width: 44px; height: 44px; display: flex; align-items: center; justify-content: center; position: relative; border-radius: 5px; }
.ai { width: 25px; height: 25px; }
.dot::after, .dot-b::after, .active-app::after { content: ""; position: absolute; bottom: 0; left: 19px; width: 6px; height: 3px; background: #6a7a80; border-radius: 2px; }
.dot-b::after { width: 14px; left: 15px; background: #8a5a2a; }
.active-app { background: #e5f3f3; width: 38px; margin-left: 3px; }
.active-app::after { left: 12px; width: 15px; background: #217a8a; }
.playt { font-size: 5px; font-weight: 700; fill: #333; font-family: "Liberation Sans", sans-serif; }
.xt { font-size: 12px; font-weight: 700; fill: #fff; font-family: "Liberation Sans", sans-serif; }
.tray { margin-left: auto; display: flex; align-items: center; color: #222; padding-right: 19px; }
.tr-i { flex: none; }
.tr-up { width: 9px; height: 8px; margin-right: 13px; }
.tr-mic { width: 12px; height: 17px; margin-right: 20px; }
.tr-ying { font-size: 15px; color: #556; margin-right: 20px; }
.tr-s { width: 17px; height: 17px; margin-right: 22px; }
.tr-pl { width: 17px; height: 17px; margin-right: 8px; }
.tr-vol { width: 16px; height: 14px; margin-right: 16px; }
.clock { width: 58px; display: flex; flex-direction: column; align-items: flex-end; font-size: 11.500px; line-height: 16px; font-family: "Liberation Sans", sans-serif; white-space: nowrap; }
.badge { width: 16px; height: 16px; border-radius: 50%; background: #217a8a; color: #fff; font-size: 10px; text-align: center; line-height: 16px; margin-left: 11px; font-family: "Liberation Sans", sans-serif; }

/* overlays */
.keytip { position: absolute; left: 100px; top: 750px; width: 246px; height: 61px; background: rgba(55, 55, 55, .76); border-radius: 6px; color: #f4f4f4; font-family: "Liberation Mono", monospace; font-size: 29px; line-height: 61px; padding-left: 20px; white-space: nowrap; letter-spacing: -2.400px; }
.key-arrow { font-family: "DejaVu Sans", sans-serif; font-weight: 700; font-size: 28px; margin-left: 13px; letter-spacing: 0; }
.watermark { position: absolute; left: 1264px; top: 13px; color: #b91c1c; font-size: 30px; font-weight: 400; line-height: 42px; display: flex; gap: 22px; }
.ime { position: absolute; left: 1275px; top: 48px; width: 161px; height: 23px; background: #fff; display: flex; align-items: center; gap: 8px; box-shadow: 0 0 2px rgba(0,0,0,.2); }
.ime-s { width: 25px; height: 25px; margin-left: 5px; margin-right: -5px; margin-top: 2px; }
.ime-y { font-size: 14px; font-weight: 700; color: #222; }
.ime-i { width: 14px; height: 14px; }
.ime-moon { margin-left: 2px; width: 15px; height: 15px; }
.ime-kb { width: 16px; }
.ime-p { font-size: 13px; font-weight: 700; color: #222; width: 10px; }

.dialog { position: absolute; left: 559px; top: 544px; width: 591px; height: 356px; background: #f0f0f0; border-radius: 8px 8px 0 0; box-shadow: 0 0 12px rgba(0,0,0,.28); color: #333; font-size: 12.500px; }
.d-title { height: 30px; background: #fff; border-radius: 8px 8px 0 0; display: flex; align-items: center; padding: 0 0 4px 8px; color: #333; font-size: 12px; position: relative; }
.d-q { position: absolute; left: 519px; top: 3px; font-size: 13px; }
.d-x { position: absolute; left: 562px; top: 8px; width: 12px; height: 12px; }
.d-body { padding: 18px 6px 0; position: relative; height: 326px; }
.d-group { margin: 0; padding: 0; border: 1px solid #dcdcdc; height: 171px; position: relative; width: 578px; }
.d-group legend { position: absolute; left: 3px; top: -11px; background: #f0f0f0; padding-right: 2px; font-size: 12px; line-height: 18px; color: #444; }
.d-rows { padding-top: 15px; position: relative; height: 169px; }
.d-row { height: 30px; display: flex; align-items: flex-start; }
.d-row label { width: 116px; text-align: right; line-height: 26px; flex: none; }
.d-input { width: 198px; height: 26px; margin-left: 9px; background: #fff; border: 1px solid #b0b0b0; padding-left: 3px; line-height: 24px; position: relative; flex: none; font-size: 12.500px; display: flex; }
.caret { width: 1px; height: 18px; background: #000; margin: 3px 0 0 1px; display: block; }
.rb { position: absolute; right: -1px; top: -1px; width: 21px; height: 26px; background: #f5f5f5; border: 1px solid #c5c5c5; border-radius: 0 0 4px 4px; display: flex; align-items: flex-start; justify-content: center; padding-top: 3px; }
.rb-i { width: 15px; height: 15px; }
.d-eq { width: 28px; text-align: center; flex: none; line-height: 26px; }
.d-val { width: 193px; white-space: nowrap; overflow: hidden; line-height: 26px; font-size: 12px; flex: none; }
.d-thumb { position: absolute; left: 560px; top: 34px; width: 2px; height: 16px; background: #888; }
.d-result { position: absolute; left: 329px; top: 189px; display: flex; line-height: 26px; }
.d-desc { position: absolute; left: 6px; top: 214px; margin: 0; line-height: 18px; font-size: 12px; }
.d-help { position: absolute; left: 113px; top: 246px; margin: 0; line-height: 18px; font-size: 12px; }
.d-rule { position: absolute; left: 6px; right: 2px; top: 313px; height: 1px; background: #dcdcdc; }
```
